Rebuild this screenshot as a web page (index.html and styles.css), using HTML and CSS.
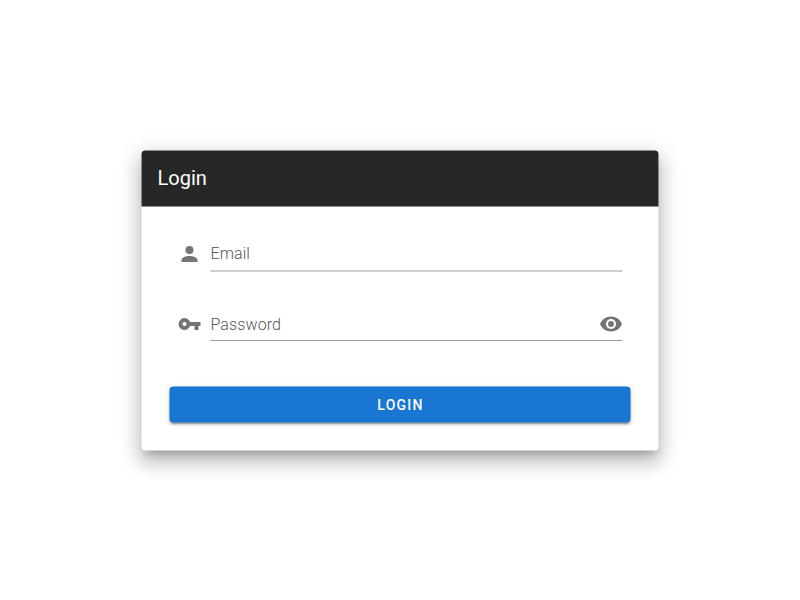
FILE: index.html
```html
<!DOCTYPE html>
<html lang="en">
<head>
<meta charset="utf-8">
<title>Login</title>
<link rel="stylesheet" href="styles.css">
</head>
<body>
<main class="card">
  <header class="toolbar">Login</header>
  <form class="form">
    <div class="row">
      <svg class="icon person" viewBox="0 0 24 24"><path d="M12,4A4,4 0 0,1 16,8A4,4 0 0,1 12,12A4,4 0 0,1 8,8A4,4 0 0,1 12,4M12,14C16.42,14 20,15.79 20,18V20H4V18C4,15.79 7.58,14 12,14Z"/></svg>
      <div class="field"><span class="label">Email</span></div>
    </div>
    <div class="row">
      <svg class="icon" viewBox="0 0 24 24"><path d="M7 14A2 2 0 1 1 9 12A2 2 0 0 1 7 14M12.65 10A6 6 0 1 0 12.65 14H17V18H21V14H23V10Z"/></svg>
      <div class="field"><span class="label">Password</span>
        <svg class="icon eye" viewBox="0 0 24 24"><path d="M12,9A3,3 0 0,0 9,12A3,3 0 0,0 12,15A3,3 0 0,0 15,12A3,3 0 0,0 12,9M12,17A5,5 0 0,1 7,12A5,5 0 0,1 12,7A5,5 0 0,1 17,12A5,5 0 0,1 12,17M12,4.5C7,4.5 2.73,7.61 1,12C2.73,16.39 7,19.5 12,19.5C17,19.5 21.27,16.39 23,12C21.27,7.61 17,4.5 12,4.5Z"/></svg>
      </div>
    </div>
    <button class="button" type="button">Login</button>
  </form>
</main>
</body>
</html>
```
FILE: styles.css
```css
* { box-sizing: border-box; }
body {
  margin: 0;
  height: 100vh;
  display: flex;
  align-items: center;
  justify-content: center;
  background: #fff;
  font-family: Roboto, sans-serif;
}
.card {
  width: 517px;
  height: 300px;
  margin: 2px 0 0 1px;
  transform: translate(-.5px, -.5px);
  border-radius: 4px;
  background: #fff;
  box-shadow: 0 7px 8px -4px rgba(0,0,0,.2), 0 12px 17px 2px rgba(0,0,0,.14), 0 5px 22px 4px rgba(0,0,0,.12);
}
.toolbar {
  height: 56px;
  padding: 0 16px;
  border-radius: 4px 4px 0 0;
  background: #272727;
  color: #fff;
  font-size: 20px;
  line-height: 55px;
}
.form { padding: 28px; }
.row {
  display: flex;
  gap: 9px;
  height: 70px;
  padding: 0 8px;
}
.row + .row { transform: translateY(-.5px); }
.icon {
  flex: none;
  width: 24px;
  height: 24px;
  margin-top: 8px;
  fill: #757575;
}
.person { transform: translateY(-.5px); }
.eye { transform: translateX(.5px); }
.field {
  display: flex;
  flex: 1;
  justify-content: space-between;
  height: 37px;
  border-bottom: 1px solid #9c9c9c;
}
.label {
  color: #555;
  font-size: 16px;
  font-weight: 300;
  letter-spacing: .1px;
  line-height: 20px;
  padding-top: 9px;
}
.row + .row .label { padding-top: 11px; }
.button {
  display: block;
  width: 100%;
  height: 36px;
  margin-top: 12px;
  padding: 0 0 0 1px;
  border: 0;
  border-radius: 4px;
  background: #1976d2;
  color: #fff;
  font: 500 14px Roboto, sans-serif;
  letter-spacing: 1.25px;
  text-transform: uppercase;
  box-shadow: 0 3px 1px -2px rgba(0,0,0,.2), 0 2px 2px 0 rgba(0,0,0,.14), 0 1px 5px 0 rgba(0,0,0,.12);
}
```
